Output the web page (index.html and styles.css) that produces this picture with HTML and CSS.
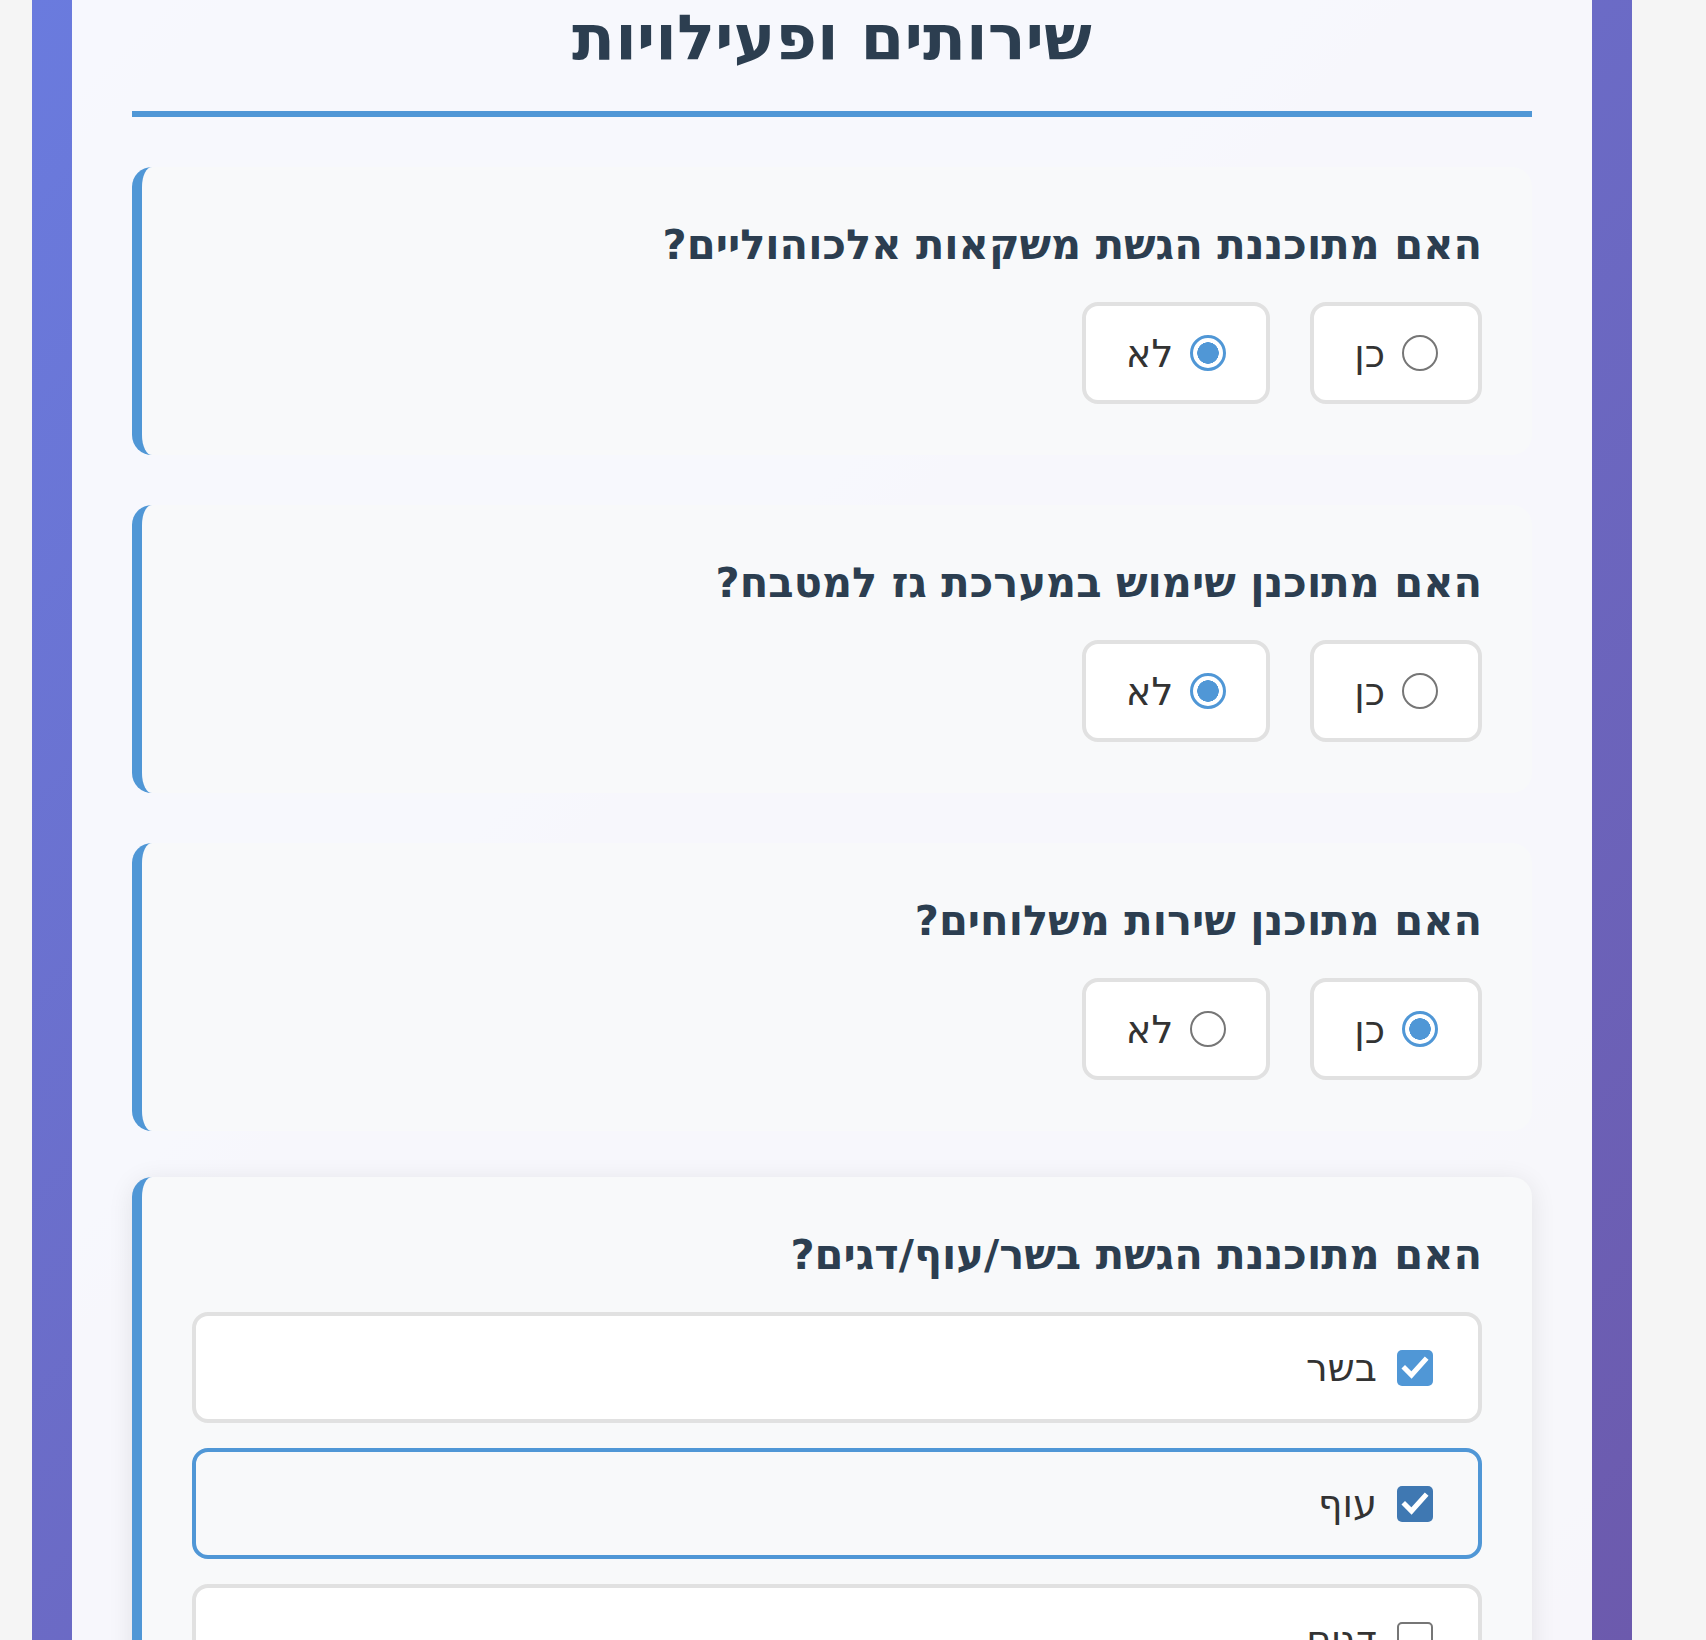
FILE: index.html
```html
<!DOCTYPE html>
<html lang="he" dir="rtl">
<head>
<meta charset="utf-8">
<title>שירותים ופעילויות</title>
<link rel="stylesheet" href="styles.css">
</head>
<body>
<div class="page">
  <div class="sheet">
    <h2 class="section-title">שירותים ופעילויות</h2>

    <div class="question-card">
      <div class="question">האם מתוכננת הגשת משקאות אלכוהוליים?</div>
      <div class="radio-row">
        <label class="radio-option"><input type="radio" name="q1" class="radio"><span>כן</span></label>
        <label class="radio-option"><input type="radio" name="q1" class="radio" checked><span>לא</span></label>
      </div>
    </div>

    <div class="question-card">
      <div class="question">האם מתוכנן שימוש במערכת גז למטבח?</div>
      <div class="radio-row">
        <label class="radio-option"><input type="radio" name="q2" class="radio"><span>כן</span></label>
        <label class="radio-option"><input type="radio" name="q2" class="radio" checked><span>לא</span></label>
      </div>
    </div>

    <div class="question-card">
      <div class="question">האם מתוכנן שירות משלוחים?</div>
      <div class="radio-row">
        <label class="radio-option"><input type="radio" name="q3" class="radio" checked><span>כן</span></label>
        <label class="radio-option"><input type="radio" name="q3" class="radio"><span>לא</span></label>
      </div>
    </div>

    <div class="question-card hovered">
      <div class="question">האם מתוכננת הגשת בשר/עוף/דגים?</div>
      <div class="check-list">
        <div class="check-option">
          <span class="cb checked"><svg viewBox="0 0 36 36" width="36" height="36"><polyline points="8,18.5 14.5,25 28,10" fill="none" stroke="#fff" stroke-width="5" stroke-linecap="square" stroke-linejoin="miter"/></svg></span>
          <span>בשר</span>
        </div>
        <div class="check-option active">
          <span class="cb checked dark"><svg viewBox="0 0 36 36" width="36" height="36"><polyline points="8,18.5 14.5,25 28,10" fill="none" stroke="#fff" stroke-width="5" stroke-linecap="square" stroke-linejoin="miter"/></svg></span>
          <span>עוף</span>
        </div>
        <div class="check-option">
          <span class="cb"></span>
          <span>דגים</span>
        </div>
      </div>
    </div>
  </div>
</div>
</body>
</html>
```

FILE: styles.css
```css
html, body {
  margin: 0;
  padding: 0;
}

body {
  background: #f5f5f5;
  font-family: "DejaVu Sans", "Liberation Sans", sans-serif;
  overflow: hidden;
}

.page {
  margin-left: 32px;
  margin-right: auto;
  width: 1600px;
  height: 1640px;
  box-sizing: border-box;
  padding: 0 40px;
  background: linear-gradient(135deg, #6a7bde 0%, #6c5aad 100%);
}

.sheet {
  height: 100%;
  background: rgba(255, 255, 255, 0.95);
  padding: 0 60px;
  overflow: hidden;
}

.section-title {
  margin: 0;
  font-size: 63px;
  font-weight: bold;
  line-height: 76px;
  padding-bottom: 35px;
  border-bottom: 6px solid #5097d6;
  text-align: center;
  color: #2c3e50;
}

.question-card {
  margin-top: 50px;
  background: #f8f9fa;
  border-left: 10px solid #5097d6;
  border-radius: 20px;
  padding: 50px 50px 51px 50px;
}

.question-card.hovered {
  transform: translateY(-4px);
  box-shadow: 0 4px 26px rgba(0, 0, 0, 0.09);
}

.question {
  font-size: 41.6px;
  font-weight: bold;
  line-height: 55px;
  color: #2c3e50;
  margin-bottom: 30px;
}

.radio-row {
  display: flex;
  gap: 40px;
}

.radio-option {
  display: flex;
  align-items: center;
  gap: 17px;
  height: 102px;
  box-sizing: border-box;
  padding: 0 40px;
  background: #fff;
  border: 4px solid #e1e1e1;
  border-radius: 16px;
  font-size: 38.4px;
  color: #333;
}

.radio {
  appearance: none;
  -webkit-appearance: none;
  margin: 0;
  width: 36px;
  height: 36px;
  box-sizing: border-box;
  border: 2px solid #767676;
  border-radius: 50%;
  background: #fff;
  flex: none;
}

.radio:checked {
  border: 3px solid #5097d6;
  background: radial-gradient(circle, #5097d6 0 10.5px, #fff 11px);
}

.check-list {
  display: flex;
  flex-direction: column;
  gap: 25px;
}

.check-option {
  display: flex;
  align-items: center;
  gap: 20px;
  height: 111px;
  box-sizing: border-box;
  padding: 0 45px;
  background: #fff;
  border: 4px solid #e1e1e1;
  border-radius: 16px;
  font-size: 38.4px;
  color: #333;
}

.check-option.active {
  background: #f8f9fa;
  border-color: #5097d6;
}

.cb {
  width: 36px;
  height: 36px;
  box-sizing: border-box;
  border: 2px solid #767676;
  border-radius: 5px;
  background: #fff;
  flex: none;
  display: block;
}

.cb svg {
  display: block;
}

.cb.checked {
  border: none;
  background: #5097d6;
}

.cb.checked.dark {
  background: #3f78b2;
}
```
